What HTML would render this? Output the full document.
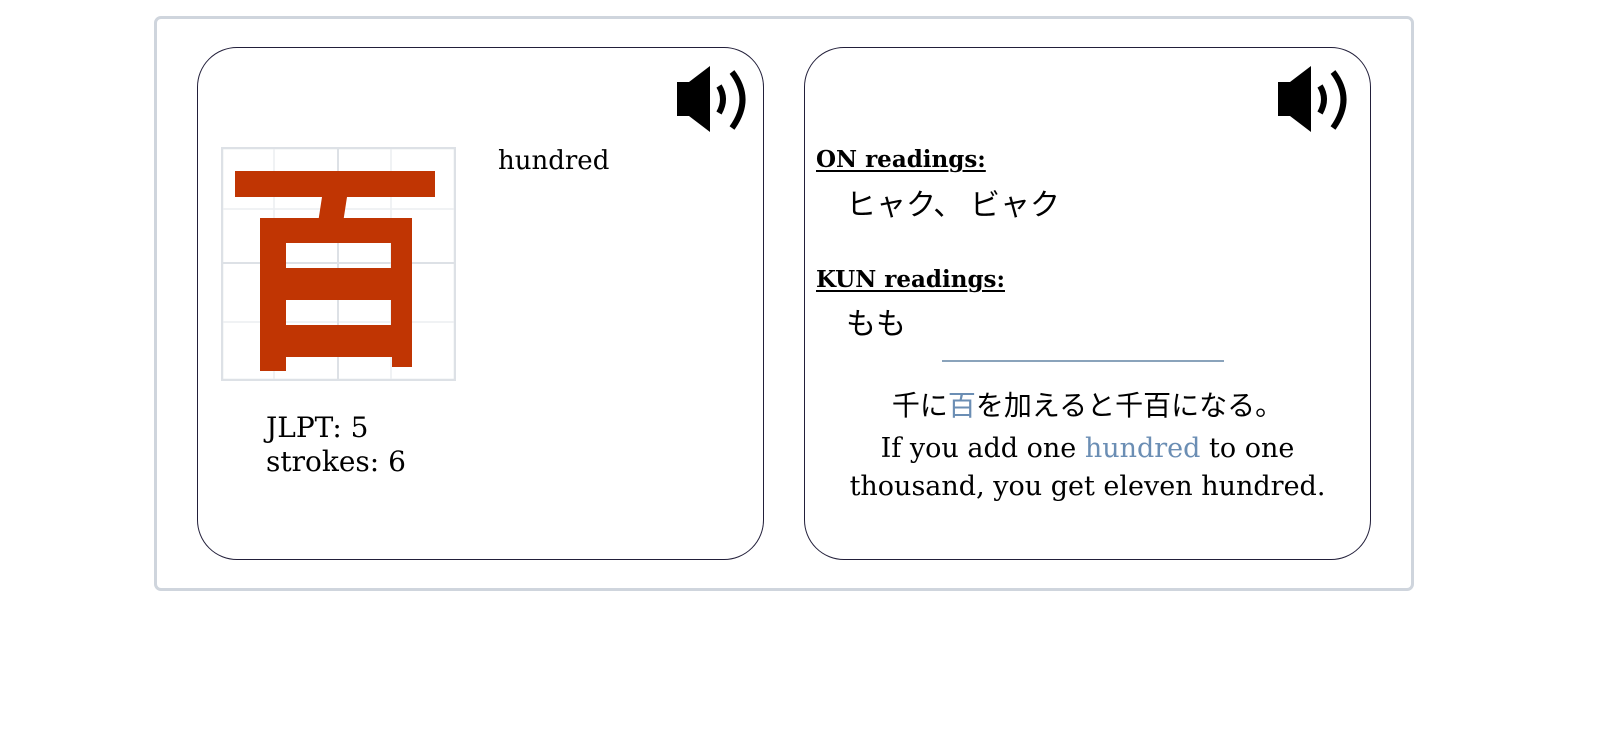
<!DOCTYPE html>
<html><head><meta charset="utf-8"><style>
body{margin:0;width:1600px;height:744px;background:#fff;font-family:"DejaVu Serif","Liberation Serif","Noto Sans CJK JP",serif;color:#000;position:relative;overflow:hidden}
.a{position:absolute;white-space:nowrap}
.outer{position:absolute;left:154px;top:16px;width:1254px;height:569px;border:3px solid #cfd5dd;border-radius:7px}
.card{position:absolute;top:47px;width:565px;height:511px;border:1.5px solid #221f3a;border-radius:40px}
.jp{font-family:"Noto Sans CJK JP",sans-serif}
u{text-decoration-thickness:2px;text-underline-offset:3px}
</style></head><body>
<div class="outer"></div>
<div class="card" style="left:197px"></div>
<div class="card" style="left:804px"></div>

<svg class="a" style="left:675px;top:66px" width="80" height="68" viewBox="0 0 80 68">
<path d="M2 16H14L35 0V66L14 50H2Z" fill="#000"/>
<path d="M44 20Q52 33 44 47" stroke="#000" stroke-width="6" fill="none"/>
<path d="M57 6Q78 33 57 62" stroke="#000" stroke-width="6" fill="none"/>
</svg>
<svg class="a" style="left:1276px;top:66px" width="80" height="68" viewBox="0 0 80 68">
<path d="M2 16H14L35 0V66L14 50H2Z" fill="#000"/>
<path d="M44 20Q52 33 44 47" stroke="#000" stroke-width="6" fill="none"/>
<path d="M57 6Q78 33 57 62" stroke="#000" stroke-width="6" fill="none"/>
</svg>

<svg class="a" style="left:221px;top:147px" width="235" height="234">
<rect x="1" y="1" width="233" height="232" fill="none" stroke="#dde1e6" stroke-width="2.5"/>
<path d="M53 2V232M170 2V232M2 62H233M2 175H233" stroke="#eceef1" stroke-width="1.5"/>
<path d="M117 2V232M2 116H233" stroke="#dde1e6" stroke-width="2"/>
<rect x="14" y="24" width="200" height="26" fill="#c03503"/>
<path d="M101 50H126L122 76H97Z" fill="#c03503"/>
<path d="M39 71H191V220H171V210H65V224H39ZM65 96V121H170V96ZM65 153V178H170V153Z" fill="#c03503" fill-rule="evenodd"/>
</svg>
<div class="a" style="left:498px;top:146px;font-size:26px">hundred</div>
<div class="a" style="left:266px;top:411px;font-size:28px;line-height:34px">JLPT: 5<br>strokes: 6</div>

<div class="a" style="left:816px;top:146px;font-size:23px;font-weight:bold"><u>ON readings:</u></div>
<div class="a jp" style="left:846px;top:180px;font-size:30px">ヒャク、 ビャク</div>
<div class="a" style="left:816px;top:266px;font-size:23px;font-weight:bold"><u>KUN readings:</u></div>
<div class="a jp" style="left:846px;top:299px;font-size:30px">もも</div>
<div class="a" style="left:942px;top:360px;width:282px;height:1.5px;background:#8aa3bb"></div>
<div class="a jp" style="left:804px;width:567px;text-align:center;top:384px;font-size:28px">千に<span style="color:#6b8eb4">百</span>を加えると千百になる。</div>
<div class="a" style="left:804px;width:567px;text-align:center;top:430px;font-size:27px;line-height:38px">If you add one <span style="color:#6b8eb4">hundred</span> to one<br>thousand, you get eleven hundred.</div>
</body></html>
